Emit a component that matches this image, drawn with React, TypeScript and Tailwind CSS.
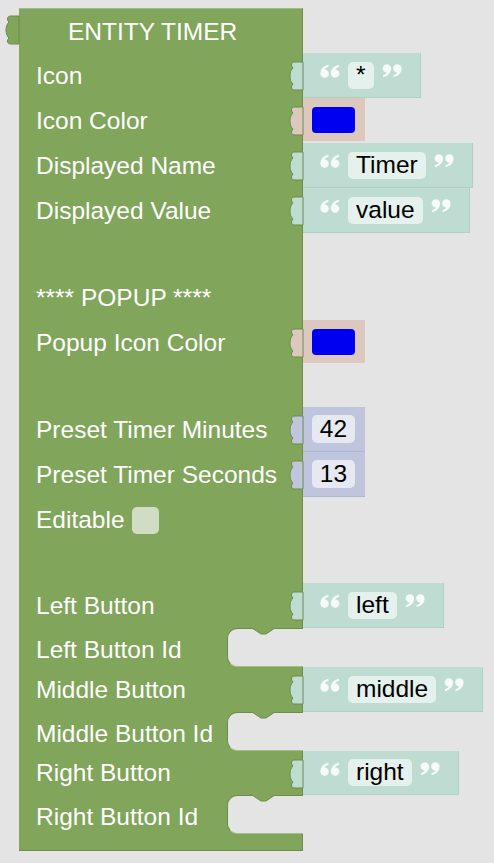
import React from 'react';

const QUOTE = 'M7.8 0.6 C3.4 1.6 0.4 4.6 0.4 9 A4 4 0 1 0 4.4 5 C5 3.9 6.2 3 8.2 2.4 Z';

function Tab({ fill, className }: { fill: string; className: string }) {
  return (
    <svg viewBox="0 0 14 28" className={`absolute w-[14px] h-[28px] overflow-visible ${className}`}>
      <path
        d="M14 0 L6 0 C2 0 1.5 3.5 4 6 C0 9 0 19 4 22 C1.5 24.5 2 28 6 28 L14 28 Z"
        fill={fill}
        stroke="#6b8d49"
        strokeWidth="1"
      />
    </svg>
  );
}

function Quote({ close }: { close?: boolean }) {
  return (
    <svg viewBox="0 0 19 13" className="w-[20px] h-[14px] mb-[8px] flex-none">
      <g transform={close ? 'rotate(180 9.5 6.5)' : undefined} fill="#ffffff" fillOpacity="0.85">
        <path d={QUOTE} />
        <path d={QUOTE} transform="translate(10 0)" />
      </g>
    </svg>
  );
}

function TextBlock({ value }: { value: string }) {
  return (
    <div className="relative flex items-center gap-[8px] pl-[17px] pr-[18px] bg-[#bfdcd2] border-r border-b border-[#b0cfc5]">
      <Tab fill="#bfdcd2" className="right-full top-[9px]" />
      <Quote />
      <div className="h-[27px] px-[8px] rounded-[5px] bg-[#e5f1ed] text-black flex items-center">{value}</div>
      <Quote close />
    </div>
  );
}

function ColourBlock() {
  return (
    <div className="relative self-start h-[43px] w-[62px] flex items-center pl-[9px] bg-[#dcc8bf]">
      <Tab fill="#dcc8bf" className="right-full top-[9px]" />
      <div className="w-[43px] h-[26px] rounded-[4px] bg-[#0000f0]" />
    </div>
  );
}

function NumberBlock({ value }: { value: string }) {
  return (
    <div className="relative w-[62px] flex items-center pl-[9px] bg-[#bfc5dc] border-b border-[#b0b7d0]">
      <Tab fill="#bfc5dc" className="right-full top-[9px]" />
      <div className="w-[43px] h-[28px] rounded-[5px] bg-[#e6e9f2] text-black flex items-center justify-center">
        {value}
      </div>
    </div>
  );
}

function Row({ h, label, child }: { h: string; label?: React.ReactNode; child?: React.ReactNode }) {
  return (
    <div className={`flex ${h}`}>
      <div className="w-[284px] flex-none bg-[#80a55b] border-r border-[#6b8d49] flex items-center pl-[17px] pt-[1px] text-white">
        {label}
      </div>
      {child}
    </div>
  );
}

function StatementRow({ label }: { label: string }) {
  return (
    <div className="flex h-[39px]">
      <div className="w-[284px] flex-none bg-[#80a55b] flex">
        <div className="w-[208px] flex items-center pl-[17px] pt-[5px] text-white">{label}</div>
        <div className="relative flex-1 bg-[#e4e4e4] rounded-l-[10px] border-t border-l border-b border-t-[#6b8d49] border-l-[#6b8d49] border-b-[#a3bd86]">
          <svg viewBox="0 0 23 7" className="absolute -top-px left-[24px] w-[23px] h-[7px] overflow-visible">
            <path d="M0 0 L9 6 L14 6 L23 0 Z" fill="#80a55b" />
            <path d="M0 0 L9 6 L14 6 L23 0" fill="none" stroke="#6b8d49" strokeWidth="1" />
          </svg>
        </div>
      </div>
    </div>
  );
}

export default function App() {
  return (
    <div className="min-h-screen bg-[#e4e4e4] pt-[8px] pl-[19px] font-['Liberation_Sans',Arial,sans-serif] text-[24.5px] leading-none">
      <div className="relative w-max">
        <Tab fill="#80a55b" className="right-full top-[8px]" />
        <div className="flex flex-col">
          <div className="w-[284px] h-[45px] bg-[#80a55b] border-t border-t-[#a1bc84] border-r border-r-[#6b8d49] flex items-center pl-[49px] pt-[3px] text-white">
            ENTITY TIMER
          </div>
          <Row h="h-[45px]" label="Icon" child={<TextBlock value="*" />} />
          <Row h="h-[45px]" label="Icon Color" child={<ColourBlock />} />
          <Row h="h-[45px]" label="Displayed Name" child={<TextBlock value="Timer" />} />
          <Row h="h-[45px]" label="Displayed Value" child={<TextBlock value="value" />} />
          <Row h="h-[43px]" />
          <Row h="h-[44px]" label="**** POPUP ****" />
          <Row h="h-[45px]" label="Popup Icon Color" child={<ColourBlock />} />
          <Row h="h-[42px]" />
          <Row h="h-[45px]" label="Preset Timer Minutes" child={<NumberBlock value="42" />} />
          <Row h="h-[45px]" label="Preset Timer Seconds" child={<NumberBlock value="13" />} />
          <Row
            h="h-[45px]"
            label={
              <span className="flex items-center gap-[7px]">
                Editable
                <span className="w-[27px] h-[27px] rounded-[5px] bg-[#d0dcc3]" />
              </span>
            }
          />
          <Row h="h-[41px]" />
          <Row h="h-[45px]" label="Left Button" child={<TextBlock value="left" />} />
          <StatementRow label="Left Button Id" />
          <Row h="h-[45px]" label="Middle Button" child={<TextBlock value="middle" />} />
          <StatementRow label="Middle Button Id" />
          <Row h="h-[44px]" label="Right Button" child={<TextBlock value="right" />} />
          <StatementRow label="Right Button Id" />
          <div className="w-[284px] h-[17px] bg-[#80a55b] border-r border-b border-[#6b8d49]" />
        </div>
      </div>
    </div>
  );
}
